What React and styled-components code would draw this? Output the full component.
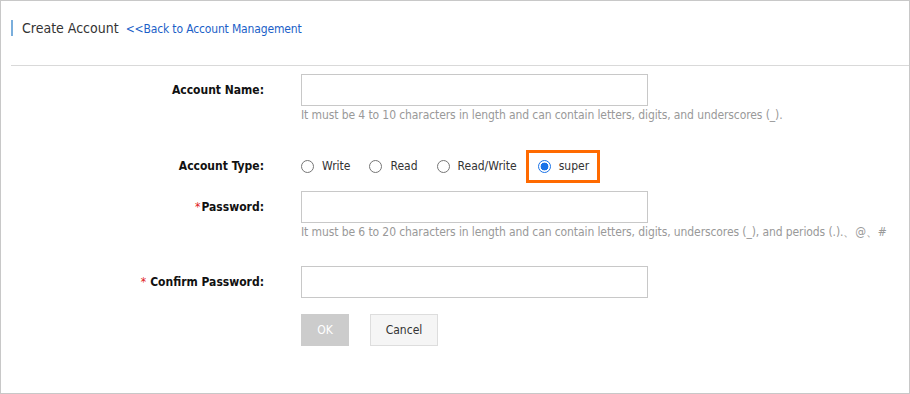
import styled, { createGlobalStyle } from "styled-components";

const GlobalStyle = createGlobalStyle`
  html, body {
    margin: 0;
    padding: 0;
    background: #fff;
  }
  body {
    font-family: "DejaVu Sans Condensed", "DejaVu Sans", sans-serif;
    font-size: 12px;
    color: #333;
  }
`;

const Panel = styled.div`
  box-sizing: border-box;
  width: 910px;
  height: 394px;
  border: 1px solid #c8c8c8;
  padding-left: 10px;
`;

const Header = styled.header`
  box-sizing: border-box;
  display: flex;
  align-items: flex-start;
  height: 65px;
  padding-top: 19px;
  border-bottom: 1px solid #d9d9d9;
`;

const Title = styled.h1`
  margin: 0;
  padding-left: 9px;
  border-left: 2px solid #7aaedc;
  font-size: 14px;
  font-weight: 400;
  line-height: 16px;
  color: #333;
`;

const BackLink = styled.a`
  margin-left: 7px;
  margin-top: 2px;
  font-size: 12px;
  letter-spacing: -0.15px;
  color: #1b5fc8;
  text-decoration: none;
  cursor: pointer;
`;

const Form = styled.form`
  display: flex;
  flex-direction: column;
  padding-top: 8px;
`;

const Row = styled.div`
  display: flex;
  align-items: flex-start;
  margin-bottom: ${(p) => p.$gap || 0}px;
`;

const Label = styled.label`
  box-sizing: border-box;
  width: 253px;
  flex: none;
  text-align: right;
  font-weight: 700;
  color: #111;
  line-height: ${(p) => p.$lh || 32}px;
`;

const Star = styled.span`
  color: #e02020;
  font-weight: 400;
  margin-right: ${(p) => (p.$spaced ? 4 : 1)}px;
`;

const Field = styled.div`
  margin-left: 37px;
  display: flex;
  flex-direction: column;
`;

const Input = styled.input`
  box-sizing: border-box;
  width: 347px;
  height: 32px;
  border: 1px solid #c8c8c8;
  outline: none;
  padding: 0 8px;
  font: inherit;
`;

const Help = styled.div`
  margin-top: 2px;
  color: #999;
  line-height: 14px;
  letter-spacing: -0.1px;
  white-space: nowrap;
`;

const RadioGroup = styled.div`
  display: flex;
  align-items: center;
  height: 32px;
`;

const Option = styled.label`
  box-sizing: border-box;
  display: flex;
  align-items: center;
  height: 33px;
  color: #333;
  margin-right: ${(p) => (p.$active ? 0 : 19)}px;
  ${(p) =>
    p.$active &&
    `
    border: 3px solid #ff6a00;
    padding: 0 8px 0 9px;
    margin-left: -10px;
  `}
`;

const Dot = styled.span`
  box-sizing: border-box;
  width: 13px;
  height: 13px;
  border-radius: 50%;
  margin-right: 8px;
  border: 1px solid ${(p) => (p.$checked ? "#1a73e8" : "#767676")};
  background: ${(p) =>
    p.$checked
      ? "radial-gradient(circle, #1a73e8 0 3.6px, #fff 4.2px)"
      : "#fff"};
  ${(p) => p.$checked && "border-width: 1.5px;"}
`;

const Buttons = styled.div`
  display: flex;
  gap: 21px;
  margin-left: 290px;
`;

const Button = styled.button`
  box-sizing: border-box;
  height: 32px;
  padding: 0;
  width: ${(p) => (p.$primary ? 48 : 68)}px;
  font: inherit;
  border: 1px solid ${(p) => (p.$primary ? "#cccccc" : "#dddddd")};
  background: ${(p) => (p.$primary ? "#cccccc" : "#f5f5f5")};
  color: ${(p) => (p.$primary ? "#fff" : "#333")};
  cursor: pointer;
`;

const types = ["Write", "Read", "Read/Write", "super"];

export default function App() {
  return (
    <>
      <GlobalStyle />
      <Panel>
        <Header>
          <Title>Create Account</Title>
          <BackLink>&lt;&lt;Back to Account Management</BackLink>
        </Header>
        <Form>
          <Row $gap={28}>
            <Label>Account Name:</Label>
            <Field>
              <Input />
              <Help>
                It must be 4 to 10 characters in length and can contain letters, digits, and underscores (_).
              </Help>
            </Field>
          </Row>
          <Row $gap={8}>
            <Label $lh={33}>Account Type:</Label>
            <Field>
              <RadioGroup>
                {types.map((t) => (
                  <Option key={t} $active={t === "super"}>
                    <Dot $checked={t === "super"} />
                    {t}
                  </Option>
                ))}
              </RadioGroup>
            </Field>
          </Row>
          <Row $gap={27}>
            <Label>
              <Star>*</Star>Password:
            </Label>
            <Field>
              <Input type="password" />
              <Help>
                It must be 6 to 20 characters in length and can contain letters, digits, underscores (_), and periods (.).、@、#
              </Help>
            </Field>
          </Row>
          <Row $gap={16}>
            <Label>
              <Star $spaced>*</Star>Confirm Password:
            </Label>
            <Field>
              <Input type="password" />
            </Field>
          </Row>
          <Buttons>
            <Button type="button" $primary>OK</Button>
            <Button type="button">Cancel</Button>
          </Buttons>
        </Form>
      </Panel>
    </>
  );
}
